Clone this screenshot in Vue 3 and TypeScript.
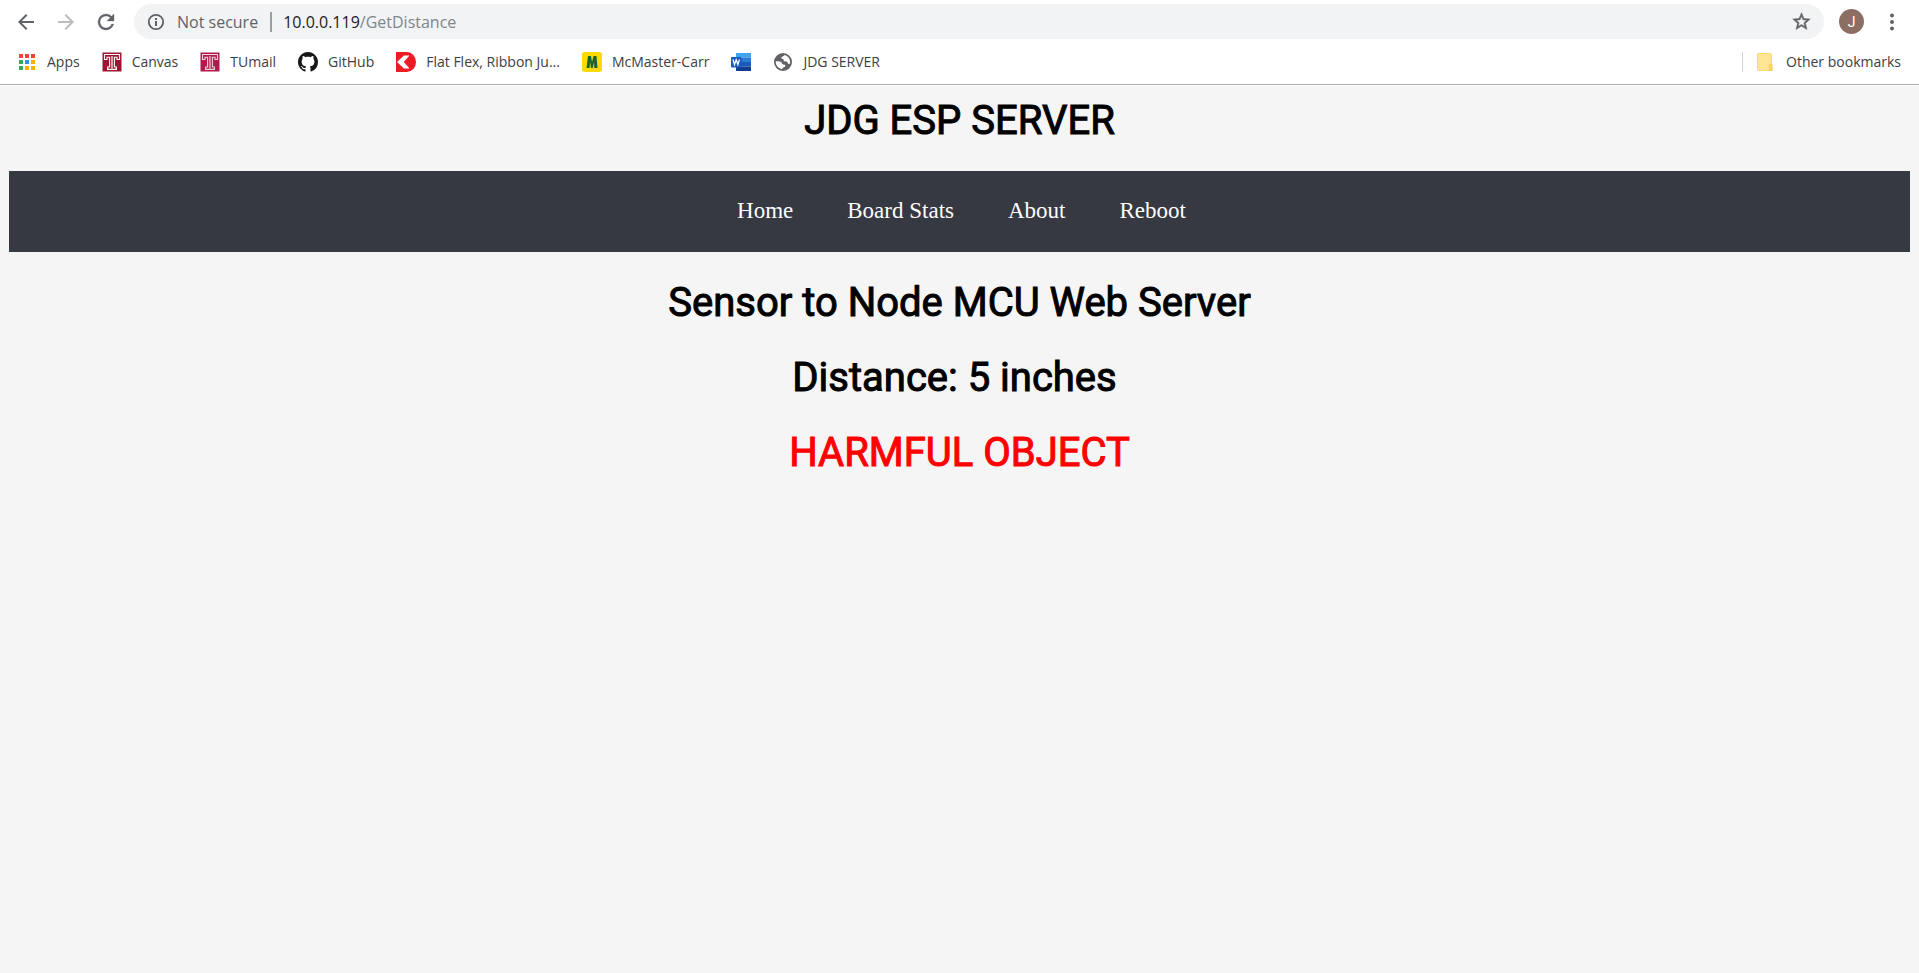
<script setup lang="ts">
interface Bookmark {
  icon: string
  label: string
  name: string
}

const bookmarks: Bookmark[] = [
  { icon: 'apps', label: 'Apps', name: 'Apps' },
  { icon: 'canvas', label: 'Canvas', name: 'Canvas' },
  { icon: 'tumail', label: 'TUmail', name: 'TUmail' },
  { icon: 'github', label: 'GitHub', name: 'GitHub' },
  { icon: 'digikey', label: 'Flat Flex, Ribbon Ju...', name: 'Flat Flex, Ribbon Jumpers' },
  { icon: 'mcmaster', label: 'McMaster-Carr', name: 'McMaster-Carr' },
  { icon: 'word', label: '', name: 'Word' },
  { icon: 'globe', label: 'JDG SERVER', name: 'JDG SERVER' },
]

const appDots = ['#f44336', '#f44336', '#f44336', '#34a853', '#2196f3', '#fbb000', '#34a853', '#fbb000', '#fbb000']

const links: string[] = ['Home', 'Board Stats', 'About', 'Reboot']
</script>

<template>
  <div class="window">
    <header class="chrome">
      <div class="toolbar">
        <button class="tool" type="button" aria-label="Back">
          <svg viewBox="0 0 24 24"><path fill="#5f6368" d="M20 11H7.83l5.59-5.59L12 4l-8 8 8 8 1.41-1.41L7.83 13H20z" /></svg>
        </button>
        <button class="tool" type="button" aria-label="Forward" disabled>
          <svg viewBox="0 0 24 24"><path fill="#babcbe" d="M12 4l-1.41 1.41L16.17 11H4v2h12.17l-5.58 5.59L12 20l8-8z" /></svg>
        </button>
        <button class="tool" type="button" aria-label="Reload">
          <svg viewBox="0 0 24 24"><path fill="#5f6368" stroke="#5f6368" stroke-width="0.3" d="M17.65 6.35A7.96 7.96 0 0 0 12 4a8 8 0 1 0 7.73 10h-2.08A6 6 0 1 1 12 6c1.66 0 3.14.69 4.22 1.78L13 11h7V4z" /></svg>
        </button>
        <div class="address">
          <svg class="info" viewBox="0 0 18 18">
            <circle cx="9" cy="9" r="7.2" fill="none" stroke="#5f6368" stroke-width="1.8" />
            <path fill="#5f6368" d="M8 8h2v5H8zM8 5h2v2H8z" />
          </svg>
          <span class="security">Not secure</span>
          <span class="bar"></span>
          <span class="url">10.0.0.119<span class="path">/GetDistance</span></span>
          <button class="star" type="button" aria-label="Bookmark this page">
            <svg viewBox="0 0 24 24"><path fill="#5f6368" stroke="#5f6368" stroke-width="0.6" d="M22 9.24l-7.19-.62L12 2 9.19 8.63 2 9.24l5.46 4.73L5.82 21 12 17.27 18.18 21l-1.63-7.03zM12 15.4l-3.76 2.27 1-4.28-3.32-2.88 4.38-.38L12 6.1l1.71 4.04 4.38.38-3.32 2.88 1 4.28z" /></svg>
          </button>
        </div>
        <button class="avatar" type="button" aria-label="Profile">J</button>
        <button class="more" type="button" aria-label="Menu">
          <svg viewBox="0 0 4 18"><g fill="#5f6368"><circle cx="2" cy="2.6" r="2" /><circle cx="2" cy="9" r="2" /><circle cx="2" cy="15.4" r="2" /></g></svg>
        </button>
      </div>

      <div class="bookmarks">
        <a v-for="b in bookmarks" :key="b.name" class="bookmark" href="#" :aria-label="b.name">
          <svg v-if="b.icon === 'apps'" viewBox="0 0 20 20">
            <rect v-for="(c, i) in appDots" :key="i" :x="2 + (i % 3) * 6" :y="2 + Math.floor(i / 3) * 6" width="4" height="4" :fill="c" />
          </svg>
          <svg v-else-if="b.icon === 'canvas' || b.icon === 'tumail'" viewBox="0 0 20 20">
            <rect x="0.5" y="0.5" width="19" height="19" :fill="b.icon === 'canvas' ? '#9d1631' : '#b01b4b'" />
            <path fill="none" :stroke="b.icon === 'canvas' ? '#fff' : '#f3d3de'" stroke-width="1.1" d="M2.5 7.5v-5h15v5h-2.5v-2.3h-2.6v9.8h2v2.4H5.6v-2.4h2V5.2H5v2.3z" />
            <path fill="none" :stroke="b.icon === 'canvas' ? '#fff' : '#f3d3de'" stroke-width="1.2" d="M10 4v12.5" />
          </svg>
          <svg v-else-if="b.icon === 'github'" viewBox="0 0 16 16">
            <path fill="#191717" d="M8 0C3.58 0 0 3.58 0 8c0 3.54 2.29 6.53 5.47 7.59.4.07.55-.17.55-.38 0-.19-.01-.82-.01-1.49-2.01.37-2.53-.49-2.69-.94-.09-.23-.48-.94-.82-1.13-.28-.15-.68-.52-.01-.53.63-.01 1.08.58 1.23.82.72 1.21 1.87.87 2.33.66.07-.52.28-.87.51-1.07-1.78-.2-3.64-.89-3.64-3.95 0-.87.31-1.59.82-2.15-.08-.2-.36-1.02.08-2.12 0 0 .67-.21 2.2.82.64-.18 1.32-.27 2-.27s1.36.09 2 .27c1.53-1.04 2.2-.82 2.2-.82.44 1.1.16 1.92.08 2.12.51.56.82 1.27.82 2.15 0 3.07-1.87 3.75-3.65 3.95.29.25.54.73.54 1.48 0 1.07-.01 1.93-.01 2.2 0 .21.15.46.55.38A8.01 8.01 0 0 0 16 8c0-4.42-3.58-8-8-8z" />
          </svg>
          <svg v-else-if="b.icon === 'digikey'" viewBox="0 0 20 20">
            <path fill="#ec1c24" d="M0 0h11a9 10 0 0 1 0 20H0z" />
            <path fill="#fff" d="M1 10l7-6.5h5.5L7.8 10l5.7 6.500H8z" />
          </svg>
          <svg v-else-if="b.icon === 'mcmaster'" viewBox="0 0 20 20">
            <rect width="20" height="20" rx="3" fill="#ffd900" />
            <path fill="#19632f" d="M4.5 16L6 4h3l1 6 1.500-6h3L15.500 16h-3.200l-.3-6-1.200 6H9l-.9-6-.5 6z" />
          </svg>
          <svg v-else-if="b.icon === 'word'" viewBox="0 0 20 20">
            <path fill="#41a5ee" d="M5 1h15v4.5H5z" />
            <path fill="#2b7cd3" d="M5 5.5h15V10H5z" />
            <path fill="#185abd" d="M5 10h15v4.5H5z" />
            <path fill="#103f91" d="M5 14.5h15V19H5z" />
            <rect y="5" width="10.5" height="10.5" rx="1" fill="#185abd" />
            <path fill="none" stroke="#fff" stroke-width="1.3" d="M2 7.5l1.5 5.2 1.7-5 1.7 5 1.5-5.2" />
          </svg>
          <svg v-else viewBox="0 0 20 20">
            <circle cx="10" cy="10" r="9" fill="#5f6368" />
            <path fill="#fff" d="M11.500 3c-.3 1.500-2.300 1.200-3 2.200-.5.900.3 1.600 1.200 1.900.9.300 1.200 1.200 1.100 2.100.9.300 2.200 0 3.200.5.900.500.6 1.900 1.400 2.200.6.200 1.300-.3 1.800-.9A7.300 7.300 0 0 0 11.500 3zM2.700 9.200a7.400 7.400 0 0 0 6.600 8c-.1-1 .5-1.700 1.500-1.900 1-.3 1.600-.9 1.500-1.900-.2-1-1.300-.9-2.200-1-1-.2-1-1.400-1.700-2.200-1.100-1.200-3.800-1-5.700-1z" />
          </svg>
          <span v-if="b.label">{{ b.label }}</span>
        </a>
        <a class="bookmark other" href="#">
          <svg viewBox="0 0 16 20">
            <rect x="0.5" y="1.5" width="14" height="17" rx="1" fill="#ffe694" stroke="#f8d86c" />
            <path fill="#fbd65c" stroke="#f0c84a" stroke-width="0.6" d="M12.3 18.5v-5a1.5 1.5 0 0 1 3 0v5z" />
          </svg>
          <span>Other bookmarks</span>
        </a>
      </div>
    </header>

    <main class="page">
      <h1>JDG ESP SERVER</h1>
      <nav class="menu">
        <a v-for="l in links" :key="l" href="#">{{ l }}</a>
      </nav>
      <section class="reading">
        <h2>Sensor to Node MCU Web Server</h2>
        <h2>Distance: 5 inches&nbsp;</h2>
        <h2 class="alert">HARMFUL OBJECT</h2>
      </section>
    </main>
  </div>
</template>

<style>
body {
  margin: 0;
  background: #f5f5f5;
}
</style>

<style scoped>
.window {
  min-height: 100vh;
  display: flex;
  flex-direction: column;
  background: #f5f5f5;
}

button {
  border: 0;
  padding: 0;
  background: none;
}

svg {
  display: block;
}

.chrome {
  background: #fff;
  font-family: "Open Sans", "Noto Sans", sans-serif;
  padding-bottom: 1px;
}

.toolbar {
  display: flex;
  align-items: center;
  padding: 4px 25px 0 14px;
}

.tool {
  width: 24px;
  height: 24px;
  margin-right: 16px;
}

.tool svg {
  width: 24px;
  height: 24px;
}

.address {
  flex: 1;
  height: 35px;
  box-sizing: border-box;
  display: flex;
  align-items: center;
  padding: 0 12px 0 13px;
  border-radius: 18px;
  background: #f1f3f4;
  font-size: 16px;
  color: #202124;
}

.info {
  width: 18px;
  height: 18px;
  margin-right: 12px;
}

.security {
  color: #5f6368;
}

.bar {
  width: 2px;
  height: 20px;
  margin: 0 11px 0 12px;
  background: #9a9da0;
}

.path {
  color: #80868b;
}

.star {
  margin-left: auto;
}

.star svg {
  width: 21px;
  height: 21px;
}

.avatar {
  width: 25px;
  height: 25px;
  margin: 0 26px 0 15px;
  border-radius: 50%;
  background: #8d6e63;
  color: #fff;
  font-family: Roboto, sans-serif;
  font-size: 14px;
}

.more svg {
  width: 4px;
  height: 18px;
}

.bookmarks {
  display: flex;
  align-items: center;
  gap: 22px;
  height: 45px;
  padding: 0 18px 0 17px;
  border-bottom: 1px solid #b0b0b2;
}

.bookmark {
  display: flex;
  align-items: center;
  gap: 10px;
  color: #3c4043;
  font-size: 14px;
  text-decoration: none;
  white-space: nowrap;
}

.bookmark svg {
  width: 20px;
  height: 20px;
}

.other {
  margin-left: auto;
  padding-left: 14px;
  border-left: 1px solid #d0d2d4;
  gap: 13px;
}

.other svg {
  width: 16px;
}

.page {
  flex: 1;
  padding: 11px 9px 0;
  text-align: center;
}

h1,
h2 {
  margin: 0;
  font-family: Roboto, sans-serif;
  font-size: 40px;
  line-height: 48px;
  font-weight: 400;
  color: #000;
  -webkit-text-stroke: 1px currentColor;
}

.menu {
  display: flex;
  justify-content: center;
  gap: 54px;
  margin-top: 26px;
  padding: 27px 0 28px 4px;
  background: #363842;
  font-family: "Liberation Serif", "Times New Roman", serif;
  font-size: 23px;
  line-height: 26px;
}

.menu a {
  color: #fff;
  text-decoration: none;
}

.reading {
  display: flex;
  flex-direction: column;
  gap: 27px;
  margin-top: 27px;
}

.alert {
  color: #f00;
}
</style>
